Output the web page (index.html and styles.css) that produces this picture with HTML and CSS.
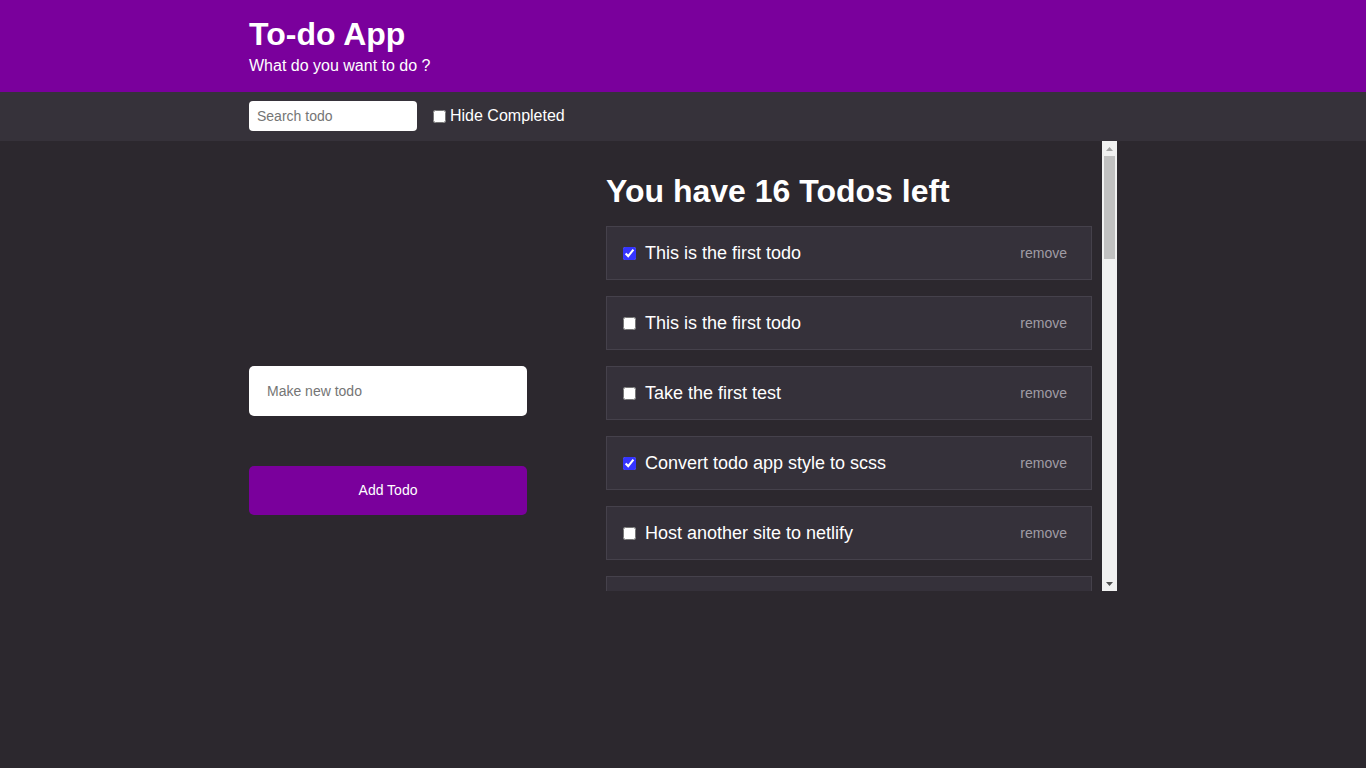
FILE: index.html
```html
<!DOCTYPE html>
<html lang="en">
<head>
<meta charset="utf-8">
<title>To-do App</title>
<link rel="stylesheet" href="styles.css">
</head>
<body>
<header class="app-header">
  <div class="container">
    <h1 class="app-title">To-do App</h1>
    <p class="app-subtitle">What do you want to do ?</p>
  </div>
</header>
<div class="toolbar">
  <div class="container toolbar-inner">
    <input class="search" type="text" placeholder="Search todo">
    <label class="hide-label"><input type="checkbox" class="check"> Hide Completed</label>
  </div>
</div>
<main class="container main">
  <form class="new-form" onsubmit="return false">
    <input class="new-input" type="text" placeholder="Make new todo">
    <button class="add-btn" type="button">Add Todo</button>
  </form>
  <div class="list-wrap">
    <section class="list-col">
      <h2 class="count">You have 16 Todos left</h2>
      <div class="todo"><label class="todo-label"><input type="checkbox" class="check" checked> This is the first todo</label><button class="remove">remove</button></div>
      <div class="todo"><label class="todo-label"><input type="checkbox" class="check"> This is the first todo</label><button class="remove">remove</button></div>
      <div class="todo"><label class="todo-label"><input type="checkbox" class="check"> Take the first test</label><button class="remove">remove</button></div>
      <div class="todo"><label class="todo-label"><input type="checkbox" class="check" checked> Convert todo app style to scss</label><button class="remove">remove</button></div>
      <div class="todo"><label class="todo-label"><input type="checkbox" class="check"> Host another site to netlify</label><button class="remove">remove</button></div>
      <div class="todo"><label class="todo-label"><input type="checkbox" class="check"> Learn React hooks</label><button class="remove">remove</button></div>
      <div class="todo"><label class="todo-label"><input type="checkbox" class="check" checked> Buy groceries</label><button class="remove">remove</button></div>
      <div class="todo"><label class="todo-label"><input type="checkbox" class="check"> Read a book</label><button class="remove">remove</button></div>
      <div class="todo"><label class="todo-label"><input type="checkbox" class="check"> Write blog post</label><button class="remove">remove</button></div>
      <div class="todo"><label class="todo-label"><input type="checkbox" class="check" checked> Clean the room</label><button class="remove">remove</button></div>
      <div class="todo"><label class="todo-label"><input type="checkbox" class="check"> Go for a run</label><button class="remove">remove</button></div>
      <div class="todo"><label class="todo-label"><input type="checkbox" class="check"> Call mom</label><button class="remove">remove</button></div>
      <div class="todo"><label class="todo-label"><input type="checkbox" class="check" checked> Fix the bike</label><button class="remove">remove</button></div>
      <div class="todo"><label class="todo-label"><input type="checkbox" class="check"> Pay the bills</label><button class="remove">remove</button></div>
      <div class="todo"><label class="todo-label"><input type="checkbox" class="check"> Practice guitar</label><button class="remove">remove</button></div>
      <div class="todo"><label class="todo-label"><input type="checkbox" class="check" checked> Water the plants</label><button class="remove">remove</button></div>
      <div class="todo"><label class="todo-label"><input type="checkbox" class="check"> Update resume</label><button class="remove">remove</button></div>
      <div class="todo"><label class="todo-label"><input type="checkbox" class="check"> Learn TypeScript</label><button class="remove">remove</button></div>
      <div class="todo"><label class="todo-label"><input type="checkbox" class="check" checked> Walk the dog</label><button class="remove">remove</button></div>
      <div class="todo"><label class="todo-label"><input type="checkbox" class="check"> Plan the trip</label><button class="remove">remove</button></div>
      <div class="todo"><label class="todo-label"><input type="checkbox" class="check"> Back up laptop</label><button class="remove">remove</button></div>
      <div class="todo"><label class="todo-label"><input type="checkbox" class="check" checked> Reply to emails</label><button class="remove">remove</button></div>
      <div class="todo"><label class="todo-label"><input type="checkbox" class="check"> Finish the course</label><button class="remove">remove</button></div>
      <div class="todo"><label class="todo-label"><input type="checkbox" class="check"> Cook dinner</label><button class="remove">remove</button></div>
      <div class="todo"><label class="todo-label"><input type="checkbox" class="check" checked> Deploy the app</label><button class="remove">remove</button></div>
    </section>
    <div class="fake-scrollbar" aria-hidden="true">
      <div class="sb-btn">
        <svg width="7" height="4" viewBox="0 0 7 4"><polygon points="3.5,0 7,4 0,4" fill="#a3a3a3"/></svg>
      </div>
      <div class="sb-track"><div class="sb-thumb"></div></div>
      <div class="sb-btn">
        <svg width="7" height="4" viewBox="0 0 7 4"><polygon points="0,0 7,0 3.5,4" fill="#505050"/></svg>
      </div>
    </div>
  </div>
</main>
</body>
</html>
```

FILE: styles.css
```css
* { box-sizing: border-box; }
html, body {
  margin: 0;
  padding: 0;
  background: #2c282e;
  font-family: "Liberation Sans", Arial, sans-serif;
  color: #fff;
}
body { min-height: 768px; }
.container {
  width: 868px;
  margin: 0 auto;
}
.app-header {
  background: #7a009c;
  height: 92px;
  padding-top: 16px;
}
.app-title {
  margin: 0;
  font-size: 32px;
  font-weight: bold;
  line-height: 37px;
}
.app-subtitle {
  margin: 4px 0 0;
  font-size: 16px;
  line-height: 18px;
}
.toolbar {
  background: #36323a;
  height: 49px;
}
.toolbar-inner {
  display: flex;
  align-items: center;
  height: 48px;
  gap: 16px;
}
.search {
  width: 168px;
  height: 30px;
  border: none;
  border-radius: 4px;
  padding: 0 8px;
  font-family: inherit;
  font-size: 14px;
  color: #333;
  background: #fff;
  outline: none;
}
.search::placeholder { color: #757575; }
.hide-label {
  display: flex;
  align-items: center;
  font-size: 16px;
  color: #fff;
}
.check {
  width: 13px;
  height: 13px;
  margin: 0 4px 0 0;
  accent-color: #3535ff;
}
.main {
  display: grid;
  grid-template-columns: 278px 1fr;
}
.new-form {
  display: flex;
  flex-direction: column;
  padding-top: 225px;
  gap: 50px;
}
.new-input {
  height: 50px;
  border: none;
  border-radius: 5px;
  padding: 0 18px;
  font-family: inherit;
  font-size: 14px;
  background: #fff;
  outline: none;
}
.new-input::placeholder { color: #757575; }
.add-btn {
  height: 49px;
  border: none;
  border-radius: 5px;
  background: #7a009c;
  color: #fff;
  font-family: inherit;
  font-size: 14px;
  padding-bottom: 2px;
}
.list-wrap {
  justify-self: end;
  display: flex;
  width: 511px;
  height: 450px;
}
.list-col {
  flex: 1;
  height: 450px;
  overflow-y: auto;
  scrollbar-width: none;
  padding: 32px 10px 0 0;
}
.list-col::-webkit-scrollbar { display: none; }
.fake-scrollbar {
  width: 15px;
  display: flex;
  flex-direction: column;
  background: #f1f1f1;
}
.sb-btn {
  height: 15px;
  display: flex;
  align-items: center;
  justify-content: center;
}
.sb-btn svg { display: block; }
.sb-track {
  flex: 1;
  padding: 0 2px;
}
.sb-thumb {
  height: 103px;
  background: #c1c1c1;
}
.count {
  margin: 0 0 16px;
  font-size: 32px;
  line-height: 37px;
  font-weight: bold;
}
.todo {
  display: flex;
  align-items: center;
  justify-content: space-between;
  height: 54px;
  margin-bottom: 16px;
  padding: 0 24px 0 16px;
  background: #35313a;
  border: 1px solid #45414b;
}
.todo-label {
  display: flex;
  align-items: center;
  font-size: 18px;
  color: #fff;
}
.todo-label .check { margin-right: 9px; }
.remove {
  border: none;
  background: none;
  padding: 0;
  font-family: inherit;
  font-size: 14px;
  color: #a09ca4;
}
```
